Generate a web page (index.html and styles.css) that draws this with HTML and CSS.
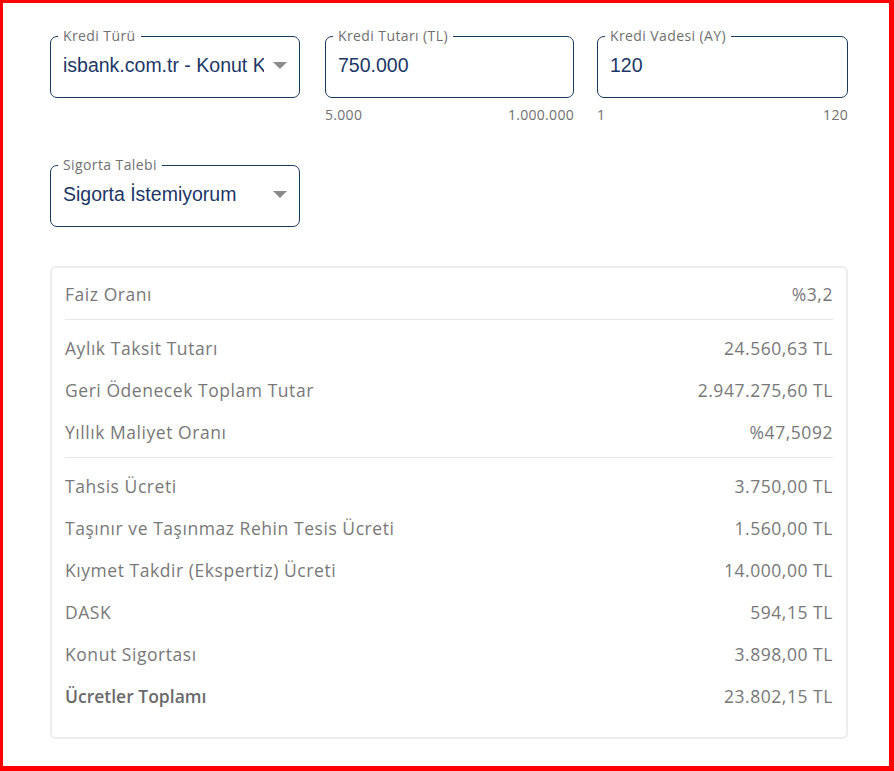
FILE: index.html
```html
<!DOCTYPE html>
<html lang="tr">
<head>
    <meta charset="UTF-8">
    <meta name="viewport" content="width=device-width, initial-scale=1.0">
    <title>Kredi Hesaplama</title>
    <link rel="stylesheet" href="styles.css">
</head>
<body>

<div class="frame">
    <div class="page">
        <!-- Loan inputs -->
        <div class="field-row">
            <div class="field-col">
                <div class="field">
                    <span class="field-label">Kredi Türü</span>
                    <span class="field-value clip">isbank.com.tr - Konut Kredisi</span>
                    <span class="caret"></span>
                </div>
            </div>
            <div class="field-col">
                <div class="field">
                    <span class="field-label">Kredi Tutarı (TL)</span>
                    <span class="field-value">750.000</span>
                </div>
                <div class="range">
                    <span>5.000</span>
                    <span>1.000.000</span>
                </div>
            </div>
            <div class="field-col">
                <div class="field">
                    <span class="field-label">Kredi Vadesi (AY)</span>
                    <span class="field-value">120</span>
                </div>
                <div class="range">
                    <span>1</span>
                    <span>120</span>
                </div>
            </div>
        </div>

        <!-- Insurance select -->
        <div class="field-row single">
            <div class="field-col">
                <div class="field">
                    <span class="field-label">Sigorta Talebi</span>
                    <span class="field-value">Sigorta İstemiyorum</span>
                    <span class="caret"></span>
                </div>
            </div>
        </div>

        <!-- Results -->
        <div class="result-card">
            <div class="group">
                <div class="row"><span>Faiz Oranı</span><span>%3,2</span></div>
            </div>
            <div class="group">
                <div class="row"><span>Aylık Taksit Tutarı</span><span>24.560,63 TL</span></div>
                <div class="row"><span>Geri Ödenecek Toplam Tutar</span><span>2.947.275,60 TL</span></div>
                <div class="row"><span>Yıllık Maliyet Oranı</span><span>%47,5092</span></div>
            </div>
            <div class="group">
                <div class="row"><span>Tahsis Ücreti</span><span>3.750,00 TL</span></div>
                <div class="row"><span>Taşınır ve Taşınmaz Rehin Tesis Ücreti</span><span>1.560,00 TL</span></div>
                <div class="row"><span>Kıymet Takdir (Ekspertiz) Ücreti</span><span>14.000,00 TL</span></div>
                <div class="row"><span>DASK</span><span>594,15 TL</span></div>
                <div class="row"><span>Konut Sigortası</span><span>3.898,00 TL</span></div>
                <div class="row total"><span>Ücretler Toplamı</span><span>23.802,15 TL</span></div>
            </div>
        </div>
    </div>
</div>

</body>
</html>
```

FILE: styles.css
```css
html, body {
    margin: 0;
    padding: 0;
}
body {
    font-family: "Open Sans", "Liberation Sans", sans-serif;
    color: #757575;
    background-color: #fff;
}
.frame {
    box-sizing: border-box;
    width: 894px;
    height: 771px;
    border-style: solid;
    border-color: #ff0000;
    border-width: 3px 5px 5px 3px;
    overflow: hidden;
}
.page {
    padding: 33px 41px 0 47px;
}
.field-row {
    display: grid;
    grid-template-columns: 250px 251px 251px;
    column-gap: 23px;
}
.field-row .field-col:nth-child(2) {
    margin-left: 2px;
}
.field-row.single {
    margin-top: 41px;
}
.field {
    position: relative;
    box-sizing: border-box;
    height: 62px;
    border: 1px solid #1b3a5c;
    border-radius: 7px;
    padding: 0 12px;
    display: flex;
    align-items: center;
}
.field-label {
    position: absolute;
    top: -10px;
    left: 7px;
    padding: 0 5px;
    background-color: #fff;
    font-size: 14px;
    letter-spacing: 0.4px;
    line-height: 18px;
    color: #707070;
}
.field-value {
    font-family: "Liberation Sans", Arial, sans-serif;
    font-size: 19.5px;
    color: #1c3766;
    white-space: nowrap;
    margin-top: -4px;
}
.field-value.clip {
    overflow: hidden;
    max-width: 201px;
}
.caret {
    margin-left: auto;
    margin-top: -4px;
    width: 0;
    height: 0;
    border-left: 7px solid transparent;
    border-right: 7px solid transparent;
    border-top: 7px solid #8a8a8a;
}
.range {
    display: flex;
    justify-content: space-between;
    margin-top: 8px;
    font-size: 14px;
    letter-spacing: 0.3px;
    line-height: 18px;
    color: #6f6f6f;
}
.result-card {
    margin-top: 39px;
    border: 2px solid #ececec;
    border-radius: 6px;
    padding: 5px 13px 20px;
}
.group + .group {
    border-top: 1px solid #e6e6e6;
    margin-top: 4px;
    padding-top: 7px;
}
.row {
    display: flex;
    justify-content: space-between;
    align-items: center;
    height: 42px;
    font-size: 17.5px;
    letter-spacing: 0.55px;
    color: #787878;
}
.row.total span:first-child {
    font-weight: 600;
    letter-spacing: 0;
    color: #6a6a6a;
}
```
